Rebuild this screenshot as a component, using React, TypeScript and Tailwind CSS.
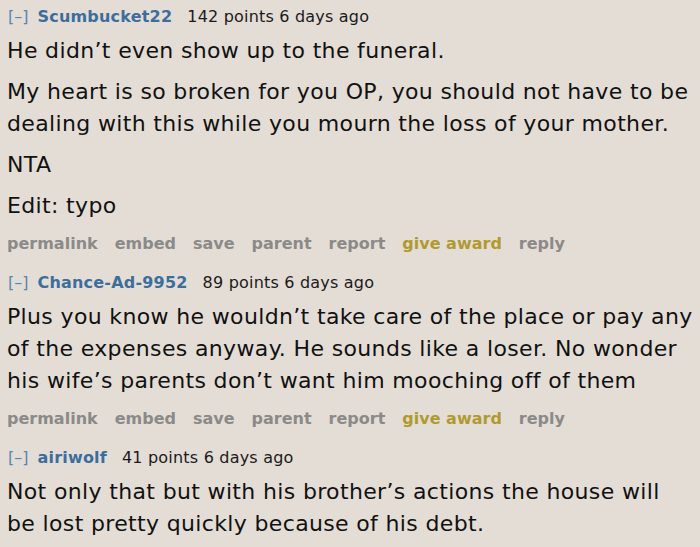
const comments = [
  {
    user: "Scumbucket22",
    points: "142 points",
    paras: [
      ["He didn’t even show up to the funeral."],
      [
        "My heart is so broken for you OP, you should not have to be",
        "dealing with this while you mourn the loss of your mother.",
      ],
      ["NTA"],
      ["Edit: typo"],
    ],
    actions: true,
  },
  {
    user: "Chance-Ad-9952",
    points: "89 points",
    paras: [
      [
        "Plus you know he wouldn’t take care of the place or pay any",
        "of the expenses anyway. He sounds like a loser. No wonder",
        "his wife’s parents don’t want him mooching off of them",
      ],
    ],
    actions: true,
  },
  {
    user: "airiwolf",
    points: "41 points",
    paras: [
      [
        "Not only that but with his brother’s actions the house will",
        "be lost pretty quickly because of his debt.",
      ],
    ],
    actions: false,
  },
];

function Actions() {
  return (
    <div className="flex gap-[17px] text-[16px] font-bold text-[#8b8a88] leading-[20px] mt-[12px]">
      <span>permalink</span>
      <span>embed</span>
      <span>save</span>
      <span>parent</span>
      <span>report</span>
      <span className="text-[#b09a30]">give award</span>
      <span>reply</span>
    </div>
  );
}

export default function App() {
  return (
    <div
      className="w-[700px] h-[547px] overflow-hidden bg-[#e3ddd6] pl-[7px] pt-[6px]"
      style={{ fontFamily: "'DejaVu Sans', Verdana, sans-serif" }}
    >
      {comments.map((c) => (
        <div key={c.user} className="mb-[18px]">
          <div className="flex items-baseline text-[16px] leading-[22px] text-[#1a1a1a]">
            <span className="text-[#5a86b3] ml-[1px]">[–]</span>
            <span className="font-bold text-[#3d6d9c] ml-[9px] tracking-[0.2px]">{c.user}</span>
            <span className="ml-[15px] tracking-[0.2px]">{c.points} 6 days ago</span>
          </div>
          <div className="text-[22px] leading-[32px] text-[#111] mt-[7px] flex flex-col gap-[9px] whitespace-nowrap tracking-[0.35px]">
            {c.paras.map((lines, i) => (
              <p key={i}>
                {lines.map((l, j) => (
                  <span key={j} className="block">{l}</span>
                ))}
              </p>
            ))}
          </div>
          {c.actions && <Actions />}
        </div>
      ))}
    </div>
  );
}
